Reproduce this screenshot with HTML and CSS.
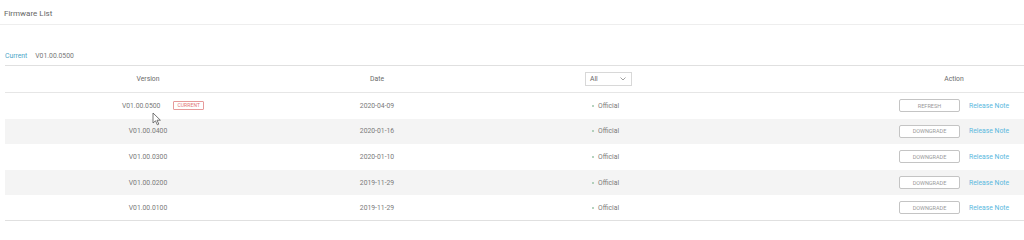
FILE: index.html
```html
<!DOCTYPE html>
<html>
<head>
<meta charset="utf-8">
<link rel="stylesheet" href="styles.css">
</head>
<body>
<div class="page">
  <div class="title">Firmware List</div>
  <div class="current"><span class="cur-label">Current</span><span class="cur-val">V01.00.0500</span></div>
  <div class="table">
    <div class="row head">
      <div class="c ver">Version</div>
      <div class="c date">Date</div>
      <div class="c status"><div class="select"><span>All</span><svg width="6" height="4" viewBox="0 0 6 4"><path d="M0.5 0.5 L3 3 L5.5 0.5" fill="none" stroke="#888" stroke-width="0.8"/></svg></div></div>
      <div class="c action">Action</div>
    </div>
    <div class="row">
      <div class="c ver"><span class="first">V01.00.0500<span class="badge">CURRENT</span></span></div>
      <div class="c date">2020-04-09</div>
      <div class="c status"><span class="dot"></span>Official</div>
      <div class="c action"><span class="btn">REFRESH</span><span class="link">Release Note</span></div>
    </div>
    <div class="row alt">
      <div class="c ver">V01.00.0400</div>
      <div class="c date">2020-01-16</div>
      <div class="c status"><span class="dot"></span>Official</div>
      <div class="c action"><span class="btn">DOWNGRADE</span><span class="link">Release Note</span></div>
    </div>
    <div class="row">
      <div class="c ver">V01.00.0300</div>
      <div class="c date">2020-01-10</div>
      <div class="c status"><span class="dot"></span>Official</div>
      <div class="c action"><span class="btn">DOWNGRADE</span><span class="link">Release Note</span></div>
    </div>
    <div class="row alt">
      <div class="c ver">V01.00.0200</div>
      <div class="c date">2019-11-29</div>
      <div class="c status"><span class="dot"></span>Official</div>
      <div class="c action"><span class="btn">DOWNGRADE</span><span class="link">Release Note</span></div>
    </div>
    <div class="row last">
      <div class="c ver">V01.00.0100</div>
      <div class="c date">2019-11-29</div>
      <div class="c status"><span class="dot"></span>Official</div>
      <div class="c action"><span class="btn">DOWNGRADE</span><span class="link">Release Note</span></div>
    </div>
  </div>
  <svg class="cursor" width="10" height="14" viewBox="0 0 10 14"><path d="M1 1 L1 11 L3.5 8.8 L5.3 12.8 L6.8 12.1 L5 8.2 L8.4 8.2 Z" fill="#fff" stroke="#555" stroke-width="0.8" stroke-linejoin="round"/></svg>
</div>
</body>
</html>
```
FILE: styles.css
```css
* { box-sizing: border-box; }
html, body { margin: 0; padding: 0; background: #fff; }
body { font-family: Roboto, "Liberation Sans", Arial, sans-serif; color: #7a7a7a; }
.page { position: relative; width: 1024px; height: 230px; overflow: hidden; }
.title { height: 25px; padding: 9px 0 0 4px; font-size: 8px; line-height: 10px; color: #666; border-bottom: 1px solid #eeeeee; }
.current { height: 40px; padding: 26px 0 0 5px; font-size: 6.8px; line-height: 10px; }
.cur-label { color: #4aa6c8; margin-right: 8px; }
.cur-val { color: #777; }
.table { margin-left: 5px; width: 1019px; border-top: 1px solid #e0e0e0; border-bottom: 1px solid #e0e0e0; }
.row { display: grid; grid-template-columns: 286px 172px 1fr 140px; height: 25.6px; align-items: center; font-size: 6.8px; }
.row.head { height: 27px; border-bottom: 1px solid #e6e6e6; color: #6a6a6a; }
.row.alt { background: #f4f4f4; }
.row.last { height: 24.6px; }
.c { display: flex; align-items: center; }
.ver, .date { justify-content: center; }
.first { margin-left: 30px; display: inline-flex; align-items: center; }
.badge { margin-left: 13px; border: 1px solid #e69a9a; color: #e27474; font-size: 5px; line-height: 7px; padding: 0 3px; border-radius: 1px; letter-spacing: 0.1px; }
.status { padding-left: 122px; }
.row:not(.head) .status { padding-left: 129px; }
.select { width: 47px; height: 14px; border: 1px solid #d8d8d8; display: flex; align-items: center; justify-content: space-between; padding: 0 5px 0 4px; color: #666; }
.dot { width: 2px; height: 2px; border-radius: 50%; background: #9cc4a8; margin-right: 4px; }
.action { justify-content: center; gap: 9px; }
.btn { width: 61px; height: 13px; border: 1px solid #c4c4c4; border-radius: 2px; font-size: 5.5px; color: #9a9a9a; display: flex; align-items: center; justify-content: center; background: #fff; }
.link { color: #5ab8de; width: 40px; white-space: nowrap; }
.cursor { position: absolute; left: 152px; top: 112px; }
```
